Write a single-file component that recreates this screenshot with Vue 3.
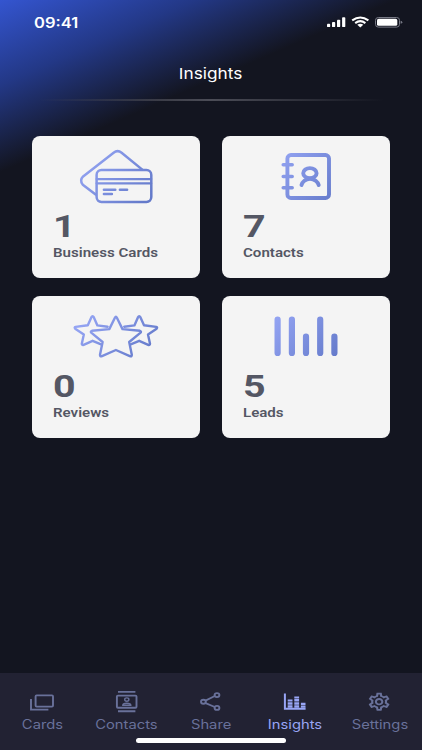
<script setup>
import { ref } from 'vue'

const stats = [
  { id: 'cards', value: 1, label: 'Business Cards' },
  { id: 'contacts', value: 7, label: 'Contacts' },
  { id: 'reviews', value: 0, label: 'Reviews' },
  { id: 'leads', value: 5, label: 'Leads' },
]

const tabs = ['Cards', 'Contacts', 'Share', 'Insights', 'Settings']
const activeTab = ref('Insights')
</script>

<template>
  <div class="screen">
    <header class="status-bar">
      <span class="time"><span class="wide">09:41</span></span>
      <svg class="status-icons" width="78" height="14" viewBox="0 0 78 14">
        <g fill="#fff">
          <rect x="1" y="7.8" width="3.2" height="3.3" rx="0.9" />
          <rect x="6" y="6" width="3.2" height="5.1" rx="0.9" />
          <rect x="11" y="3.7" width="3.2" height="7.4" rx="0.9" />
          <rect x="16.1" y="1.2" width="3.2" height="9.9" rx="0.9" />
        </g>
        <g fill="none" stroke="#fff" stroke-width="2">
          <path d="M26.2 4.4Q34.3-1.6 42.4 4.4" />
          <path d="M29.2 7.1Q34.3 3.2 39.4 7.1" />
        </g>
        <path d="M31.3 8.8Q34.3 6.8 37.3 8.8L34.3 11.4Z" fill="#fff" />
        <rect x="49.5" y="1.5" width="24" height="9.6" rx="2.8" fill="none" stroke="#777985" />
        <rect x="51" y="2.8" width="20.3" height="7" rx="1.6" fill="#fff" />
        <path d="M74.6 4.8Q76.3 5.2 76.3 6.3T74.6 7.8Z" fill="#777985" />
      </svg>
    </header>

    <h1 class="title"><span class="wide">Insights</span></h1>
    <div class="divider"></div>

    <main class="stats">
      <section v-for="stat in stats" :key="stat.id" class="stat-card">
        <svg class="stat-icon" width="168" height="75" viewBox="0.4 -0.4 168 75">
          <defs>
            <linearGradient :id="'fill-' + stat.id" gradientUnits="userSpaceOnUse" x1="55" y1="18" x2="112" y2="66">
              <stop offset="0" stop-color="#94a4f3" />
              <stop offset="1" stop-color="#647aca" />
            </linearGradient>
          </defs>
          <g fill="none" :stroke="`url(#fill-${stat.id})`" stroke-linecap="round" stroke-linejoin="round">
            <g v-if="stat.id === 'cards'" stroke-width="2.5">
              <path d="M110.7 33.2L90 16.3Q86 13.2 82 16.3L51.5 40Q47.7 44 51.2 48.3L64 58" />
              <rect x="65" y="33.7" width="54.7" height="31.8" rx="4.8" />
              <path d="M65 42.7H119.6M65 46.9H119.6" stroke-width="2.2" />
              <path d="M72.3 53.3H83.7M88.3 53.3H95.5M72.3 57.7H80.3" />
            </g>
            <g v-else-if="stat.id === 'contacts'" stroke-width="3.9">
              <rect x="65.8" y="18.6" width="41.6" height="43" rx="3.5" />
              <path d="M61.6 28.3H70.6M61.6 40H70.6M61.6 51.4H70.6" stroke-width="3.5" />
              <ellipse cx="88.3" cy="36.8" rx="6.7" ry="5.1" />
              <path d="M79.9 48.6C80.6 45.5 84 42.3 88.4 42.3S96.3 45.5 97.1 48.6" />
            </g>
            <g v-else-if="stat.id === 'reviews'" stroke-width="2.4">
              <path
                d="M76 30.3L65.8 29L62.3 21Q61 18.6 59.7 21L56.2 28.8L44 30.5Q42.4 31 43.6 32.3L52.2 38.2L50.2 47.3Q50.2 49 52 48.4L61 44.4L69.5 48"
              />
              <path
                d="M92.6 30.3L102.8 29L106.3 21Q107.6 18.6 108.9 21L112.4 28.8L124.6 30.5Q126.2 31 125 32.3L116.4 38.2L118.4 47.3Q118.4 49 116.6 48.4L107.6 44.4L99.1 48"
              />
              <path
                d="M85.3 21.4Q84.3 19.4 83.3 21.4L77.7 32.7L60.3 34.4Q58.4 35 59.9 36.5L71 45.6L68.4 58.3Q68.2 60.5 70.4 59.7L84.3 53.6L98.2 59.7Q100.4 60.5 100.2 58.3L97.6 45.6L108.7 36.5Q110.2 35 108.3 34.4L90.9 32.7Z"
              />
            </g>
            <path
              v-else
              stroke-width="6.2"
              d="M56 23.3V56.5M70.3 23.3V56.5M84.4 40.3V56.5M98.6 23.3V56.5M112.8 40.3V56.5"
            />
          </g>
        </svg>
        <strong class="stat-value"><span class="wide">{{ stat.value }}</span></strong>
        <span class="stat-label"><span class="wide">{{ stat.label }}</span></span>
      </section>
    </main>

    <nav class="tab-bar">
      <button
        v-for="tab in tabs"
        :key="tab"
        class="tab"
        :class="{ active: tab === activeTab }"
        @click="activeTab = tab"
      >
        <svg width="30" height="24" viewBox="0 0 30 24" fill="none" stroke="currentColor" stroke-width="1.9">
          <g v-if="tab === 'Cards'">
            <rect x="8.6" y="5.4" width="17.4" height="11.2" rx="1" />
            <path d="M4 9V19.6H21.4" />
          </g>
          <g v-else-if="tab === 'Contacts'">
            <path d="M6 1.9H23.4M6 21.3H23.4" />
            <rect x="4.9" y="5.6" width="19.6" height="12.2" rx="1" />
            <ellipse cx="14.8" cy="9.6" rx="2.1" ry="1.7" stroke-width="1.4" />
            <path d="M10.8 15.2C10.8 12.6 18.8 12.6 18.8 15.2Z" stroke-width="1.4" />
          </g>
          <g v-else-if="tab === 'Share'">
            <path d="M9 10.8L18.8 6M9 12.8L18.8 17" />
            <ellipse cx="21" cy="5.1" rx="2.4" ry="2" />
            <ellipse cx="7.4" cy="11.8" rx="2.4" ry="2" />
            <ellipse cx="21" cy="17.9" rx="2.4" ry="2" />
          </g>
          <g v-else-if="tab === 'Insights'">
            <path d="M4.9 3.6V18.8H25.6" stroke-width="2" />
            <path d="M10.1 17.8V9.5" stroke-width="4.8" stroke-dasharray="2.5 0.6" />
            <path d="M16.7 17.8V6.4" stroke-width="4.8" stroke-dasharray="2.5 0.6" />
            <path d="M23.2 17.8V12.8" stroke-width="4.6" stroke-dasharray="2.3 0.6" />
          </g>
          <g v-else transform="translate(1.4 0.9) scale(1.06 0.9)">
            <path
              fill="currentColor"
              stroke="none"
              d="M19.43 12.98c.04-.32.07-.64.07-.98 0-.34-.03-.66-.07-.98l2.11-1.65c.19-.15.24-.42.12-.64l-2-3.46c-.09-.16-.26-.25-.44-.25-.06 0-.12.01-.17.03l-2.49 1c-.52-.4-1.08-.73-1.69-.98l-.38-2.65C14.46 2.18 14.25 2 14 2h-4c-.25 0-.46.18-.49.42l-.38 2.65c-.61.25-1.17.59-1.69.98l-2.49-1c-.06-.02-.12-.03-.18-.03-.17 0-.34.09-.43.25l-2 3.46c-.13.22-.07.49.12.64l2.11 1.65c-.04.32-.07.65-.07.98 0 .33.03.66.07.98l-2.11 1.65c-.19.15-.24.42-.12.64l2 3.46c.09.16.26.25.44.25.06 0 .12-.01.17-.03l2.49-1c.52.4 1.08.73 1.69.98l.38 2.65c.03.24.24.42.49.42h4c.25 0 .46-.18.49-.42l.38-2.65c.61-.25 1.17-.59 1.69-.98l2.49 1c.06.02.12.03.18.03.17 0 .34-.09.43-.25l2-3.46c.12-.22.07-.49-.12-.64l-2.11-1.65zm-1.98-1.71c.04.31.05.52.05.73 0 .21-.02.43-.05.73l-.14 1.13.89.7 1.08.84-.7 1.21-1.27-.51-1.04-.42-.9.68c-.43.32-.84.56-1.25.73l-1.06.43-.16 1.13-.2 1.35h-1.4l-.19-1.35-.16-1.13-1.06-.43c-.43-.18-.83-.41-1.23-.71l-.91-.7-1.06.43-1.27.51-.7-1.21 1.08-.84.89-.7-.14-1.13c-.03-.31-.05-.54-.05-.74s.02-.43.05-.73l.14-1.13-.89-.7-1.08-.84.7-1.21 1.27.51 1.04.42.9-.68c.43-.32.84-.56 1.25-.73l1.06-.43.16-1.13.2-1.35h1.39l.19 1.35.16 1.13 1.06.43c.43.18.83.41 1.23.71l.91.7 1.06-.43 1.27-.51.7 1.21-1.07.85-.89.7.14 1.13zM12 8c-2.21 0-4 1.79-4 4s1.79 4 4 4 4-1.79 4-4-1.79-4-4-4zm0 6c-1.1 0-2-.9-2-2s.9-2 2-2 2 .9 2 2-.9 2-2 2z"
            />
          </g>
        </svg>
        <span class="tab-label wide">{{ tab }}</span>
      </button>
      <div class="home-indicator"></div>
    </nav>
  </div>
</template>

<style>
body {
  margin: 0;
  background: #131520;
}
</style>

<style scoped>
.screen {
  height: 750px;
  display: flex;
  flex-direction: column;
  overflow: hidden;
  background: linear-gradient(156.5deg, #3455d0 0, #233886 78px, #131520 158px);
  font-family: Inter, 'Liberation Sans', sans-serif;
  color: #fff;
}

.wide {
  display: inline-block;
  transform: scaleX(1.15);
}

.status-bar {
  display: flex;
  justify-content: space-between;
  height: 44px;
  padding: 0 18px 0 34px;
}

.time {
  margin-top: 14px;
  font-size: 14px;
  line-height: 18px;
  font-weight: 600;
}
.time .wide {
  transform: scaleX(1.18);
  transform-origin: left;
}

.status-icons {
  margin-top: 16px;
}

.title {
  margin: 20px 0 0;
  font-size: 15px;
  line-height: 20px;
  font-weight: 400;
  text-align: center;
}

.divider {
  height: 2px;
  margin: 15px 38px 0;
  background: linear-gradient(90deg, transparent, #4c4d57 50%, transparent);
}

.stats {
  display: grid;
  grid-template-columns: 168px 168px;
  grid-auto-rows: 142px;
  gap: 18px 22px;
  margin: 35px 0 0 32px;
}

.stat-card {
  display: flex;
  flex-direction: column;
  background: #f4f4f4;
  border-radius: 8px;
  color: #545764;
  font-family: Roboto, 'Liberation Sans', sans-serif;
}

.stat-icon {
  flex: none;
}

.stat-value {
  margin: 0 0 0 21px;
  font-size: 32px;
  line-height: 31px;
  font-weight: 700;
}
.stat-value .wide {
  transform: scaleX(1.23);
  transform-origin: left;
}

.stat-label {
  margin: 3px 0 0 21.3px;
  font-size: 13px;
  line-height: 16px;
  font-weight: 600;
}
.stat-label .wide {
  transform: scaleX(1.16);
  transform-origin: left;
}

.tab-bar {
  position: relative;
  display: grid;
  grid-template-columns: repeat(5, 1fr);
  height: 77px;
  margin-top: auto;
  background: #222233;
}

.tab {
  display: flex;
  flex-direction: column;
  align-items: center;
  padding: 17px 0 0;
  border: 0;
  background: none;
  color: #69719a;
  font-family: inherit;
}
.tab.active {
  color: #98a5f5;
}

.tab-label {
  margin-top: 3px;
  font-size: 12.5px;
  line-height: 16px;
  transform: scaleX(1.18);
}

.home-indicator {
  position: absolute;
  left: 136px;
  bottom: 7px;
  width: 150px;
  height: 5px;
  border-radius: 3px;
  background: #fff;
}
</style>
